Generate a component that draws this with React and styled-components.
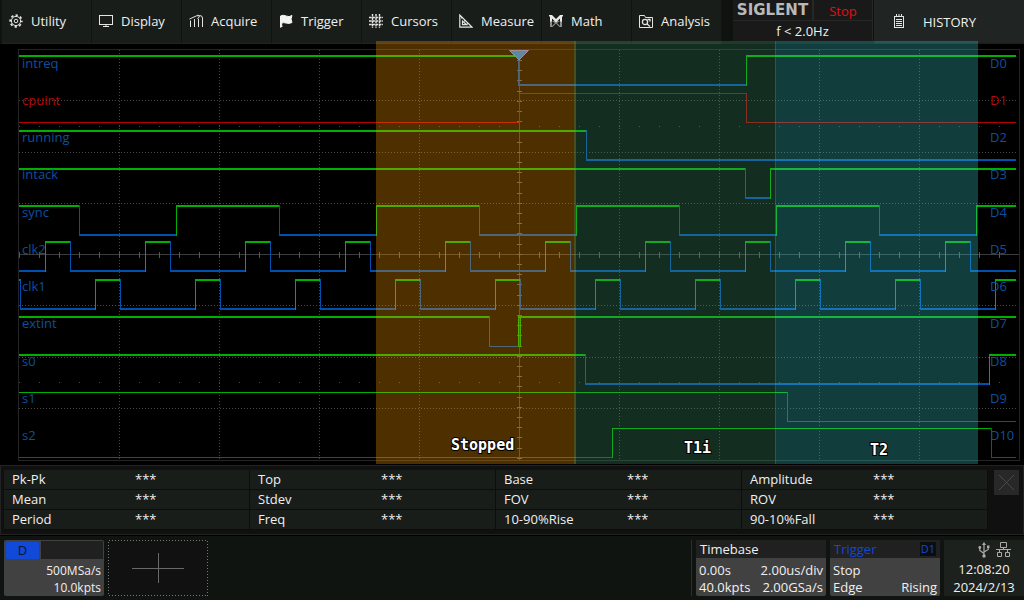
import React from "react";
import styled, { createGlobalStyle } from "styled-components";

const Global = createGlobalStyle`
  * { box-sizing: border-box; }
  body { margin: 0; background: #000; }
  button { font: inherit; color: inherit; border: 0; padding: 0; background: none; text-align: left; cursor: pointer; }
`;

const Screen = styled.main`
  display: flex;
  flex-direction: column;
  background: #000;
  color: #f0f0f0;
  font-family: "Open Sans", "Noto Sans", sans-serif;
  font-size: 13px;
  line-height: 18px;
`;

/* ---------- top bar ---------- */

const TopBar = styled.header`
  display: grid;
  grid-template-columns: minmax(0, 1fr) 140px 150px;
  column-gap: 1px;
  height: 44px;
  background: #0f1310;
`;

const Menu = styled.nav`
  display: flex;
  padding-left: 2px;
`;

const MenuButton = styled.button`
  flex: 0 1 90px;
  min-width: 0;
  display: flex;
  align-items: center;
  gap: 8px;
  padding: 0 0 2px 7px;
  background: #191d1a;
  border-right: 1px solid #101310;
  border-bottom: 1px solid #212422;
  white-space: nowrap;
`;

const Icon = styled.svg`
  flex: none;
  display: block;
  fill: none;
  stroke: #e2e5e3;
  stroke-width: 1;
`;

const Status = styled.section`
  display: grid;
  grid-template-columns: 79px 1fr;
  grid-template-rows: 20px 20px;
  gap: 1px 2px;
  background: #262826;
  height: 41px;
  padding-right: 1px;
`;

const StatusCell = styled.div`
  background: #191919;
  text-align: center;
  line-height: ${(p) => (p.$wide ? 20 : 22)}px;
  overflow: hidden;
  color: ${(p) => p.$color || "#f0f0f0"};
  grid-column: ${(p) => (p.$wide ? "1 / -1" : "auto")};
`;

const Brand = styled(StatusCell)`
  font: bold 15px/20px "DejaVu Sans", sans-serif;
  color: #b9b9b9;
`;

const HistoryButton = styled.button`
  display: flex;
  align-items: center;
  gap: 18px;
  padding: 0 0 0 19px;
  background: #202422;
  border-bottom: 1px solid #191d1a;
`;

/* ---------- waveform area ---------- */

const Plot = styled.svg`
  display: block;
  width: 100%;
  height: auto;
  overflow: visible;
  position: relative;
`;

const ChannelLabel = styled.text`
  font: 400 13px "Open Sans", sans-serif;
  fill: ${(p) => p.$color};
`;

const BandLabel = styled.text`
  font: bold 15px "DejaVu Sans Mono", monospace;
  fill: #fff;
  stroke: #000;
  stroke-width: 2;
  paint-order: stroke;
`;

/* ---------- measurements ---------- */

const Measurements = styled.section`
  display: flex;
  gap: 6px;
  margin: 1px 0;
  padding: 4px 4px 4px 3px;
  background: #101010;
  border: 1px solid #222;
`;

const MeasureTable = styled.table`
  flex: 1;
  width: 100%;
  table-layout: fixed;
  border-spacing: 0;
  background: #191d1a;
  line-height: 19px;
`;

const Name = styled.th`
  height: 20px;
  padding: 0 0 0 8px;
  text-align: left;
  font-weight: 400;
  border-bottom: 1px solid #0c0e0d;
  white-space: nowrap;
`;

const Value = styled.td`
  padding: 0 0 0 8px;
  border-bottom: 1px solid #0c0e0d;
  border-right: 1px solid #0c0e0d;
`;

const CloseButton = styled.button`
  flex: none;
  width: 25px;
  height: 25px;
  background: #282828;
`;

/* ---------- bottom bar ---------- */

const Footer = styled.footer`
  display: flex;
  gap: 4px;
  padding: 4px 0 4px 4px;
  background: #101410;
`;

const Card = styled.button`
  flex: none;
  width: ${(p) => p.$width}px;
  display: flex;
  flex-direction: column;
  background: #414141;
  border-radius: 2px;
  overflow: hidden;
`;

const CardHead = styled.span`
  align-self: stretch;
  display: flex;
  justify-content: space-between;
  align-items: center;
  height: 18px;
  padding: 0 4px;
  background: #202020;
  color: ${(p) => p.$color || "#f0f0f0"};
`;

const CardBody = styled.span`
  align-self: stretch;
  display: flex;
  flex-direction: column;
  padding: 4px 3px 0;
`;

const CardRow = styled.span`
  display: flex;
  justify-content: ${(p) => (p.$end ? "flex-end" : "space-between")};
  font-size: ${(p) => (p.$end ? 12 : 13)}px;
  line-height: 17px;
`;

const Chip = styled.span`
  padding: 0 1px;
  font-size: 11px;
  line-height: 14px;
  background: #0c0d10;
`;

const DigitalHead = styled.span`
  align-self: stretch;
  display: grid;
  grid-template-columns: 33px 1fr;
  gap: 2px;
  height: 18px;
  padding: 0 1px 0 2px;
`;

const DigitalTag = styled.span`
  margin-top: 2px;
  background: #1149d8;
  color: #0a1330;
  border-radius: 1px;
  text-align: center;
  line-height: 17px;
`;

const DigitalBlank = styled.span`
  margin-top: 1px;
  background: #202020;
`;

const AddButton = styled.button`
  flex: none;
  width: 100px;
  height: 56px;
  background: #111;
`;

const Spacer = styled.div`
  flex: 1;
  border-right: 1px solid #2c2f2d;
`;

const Clock = styled.section`
  flex: none;
  width: 80px;
  background: #1d211e;
  text-align: center;
  line-height: 18px;
`;

const ClockIcons = styled.div`
  display: flex;
  justify-content: flex-end;
  gap: 6px;
  height: 20px;
  padding: 2px 13px 0 0;
`;

/* ---------- icons ---------- */

const menu = [
  ["Utility", (
    <>
      <circle cx="7" cy="7" r="4.6" />
      <circle cx="7" cy="7" r="1.8" />
      <circle cx="7" cy="7" r="5.8" strokeWidth="1.8" strokeDasharray="2.3 2.25" strokeDashoffset="1.1" />
    </>
  )],
  ["Display", (
    <>
      <rect x="0.5" y="1.5" width="13" height="9" />
      <path d="M7 10.5V12M4 12.5h6" />
    </>
  )],
  ["Acquire", (
    <path d="M1.5 13V6.5M5.5 13V5M9.5 13V5M13.5 13V4Q13.5 1.5 10.5 1.5Q7 1.5 5 3L0.5 5M8.5 1l2 1.5-2 2.5" />
  )],
  ["Trigger", (
    <path fill="#f2f4f3" stroke="#f2f4f3" d="M1.5 13.5V2Q4 .5 7 2T13 1.5L12 5l1 3.5Q10 10 7 9T2.5 9.5L3 13" />
  )],
  ["Cursors", (
    <path strokeWidth="1.4" d="M3.5 0v14M7 0v14M10.5 0v14M0 3.5h14M0 7h14M0 10.5h14" strokeDasharray="2.6 .7" />
  )],
  ["Measure", (
    <path strokeWidth="1.2" d="M0.8 1v12.2H13.2ZM3.5 7v3.7h4.2ZM2 4h1.3M5 7h1.5M8 10l1-1" />
  )],
  ["Math", (
    <>
      <path stroke="none" fill="#8b8f8d" d="M1 7h12v6h-2.5L7 9.5 3.5 13H1z" />
      <path stroke="none" fill="#e8eae9" d="M0 1h3l4 4 4-4h3v1l-1 1v5l-2-1V4.500L7 8.500 3 4.500V7L1 8V3L0 2z" />
      <path stroke="none" fill="#191d1a" d="M3 7l3 2-3 3z" />
      <path stroke="none" fill="#191d1a" d="M11 7L8 9l3 3z" />
    </>
  )],
  ["Analysis", (
    <>
      <path d="M0.5 13.5v-12h5l1 2h7v10z" />
      <circle cx="6" cy="8" r="2.6" strokeWidth="1.3" />
      <path strokeWidth="1.3" d="M8 10l3 2.5M8.5 5.5h2.5v2" />
    </>
  )],
];

/* ---------- waveform data ---------- */

const GREEN = "#00b000";
const BLUE = "#0050b0";
const RED = "#b00000";
const LABEL_BLUE = "#0c4f9f";
const LABEL_RED = "#b80808";
const START = 19;
const END = 1016;

const pulses = (first, width) =>
  Array.from({ length: 10 }, (_, i) => [first + i * 100, first + i * 100 + width]).flat();

const channels = [
  { name: "intreq", base: 68, high: 55, low: 84, hw: 2, lw: 2, up: true, edges: [518, 746] },
  { name: "cpuint", base: 105, high: 93, low: 122, hw: 1, lw: 1, up: false, edges: [519, 746], red: true },
  { name: "running", base: 142, high: 130, low: 159, hw: 2, lw: 2, up: true, edges: [586] },
  { name: "intack", base: 179, high: 168, low: 197, hw: 2, lw: 2, up: true, edges: [745, 770] },
  { name: "sync", base: 217, high: 205, low: 234, hw: 2, lw: 2, up: true, edges: [79, 176, 279, 376, 479, 576, 679, 776, 879, 976] },
  { name: "clk2", base: 254, high: 241, low: 270, hw: 2, lw: 2, up: false, edges: pulses(45, 25) },
  { name: "clk1", base: 291, high: 279, low: 308, hw: 2, lw: 2, up: true, edges: [20, ...pulses(95, 25).slice(0, 19)] },
  { name: "extint", base: 328, high: 316, low: 346, hw: 2, lw: 1, up: true, edges: [489, 518] },
  { name: "s0", base: 366, high: 354, low: 383, hw: 2, lw: 2, up: true, edges: [585, 989] },
  { name: "s1", base: 403, high: 392, low: 421, hw: 1, lw: 1, up: true, edges: [787] },
  { name: "s2", base: 440, high: 428, low: 457, hw: 1, lw: 1, up: false, edges: [612, 991] },
];

function Wave({ ch }) {
  const stops = [START, ...ch.edges, END];
  const parts = [];
  let up = ch.up;
  for (let i = 0; i < stops.length - 1; i++) {
    const from = stops[i];
    const last = i === stops.length - 2;
    const to = last ? END : stops[i + 1] + 1;
    const color = ch.red ? RED : up ? GREEN : BLUE;
    if (i > 0) {
      parts.push(<rect key={"v" + i} x={from} y={ch.high} width="1" height={ch.low - ch.high + ch.lw} fill={color} />);
    }
    parts.push(
      <rect key={"h" + i} x={from} y={up ? ch.high : ch.low} width={to - from} height={up ? ch.hw : ch.lw} fill={color} />
    );
    up = !up;
  }
  return <g shapeRendering="crispEdges">{parts}</g>;
}

const range = (n) => Array.from({ length: n }, (_, i) => i);

function Grid() {
  return (
    <g stroke="#484848" strokeWidth="1" fill="none" shapeRendering="crispEdges">
      <rect x="18.5" y="49.5" width="1001" height="411" stroke="#242424" />
      {range(9).filter((i) => i !== 4).map((i) => (
        <path key={i} d={`M${119.5 + i * 100} 50V460`} strokeDasharray="1 2" />
      ))}
      {[100, 152, 203, 305, 357, 408].map((y) => (
        <path key={y} d={`M19 ${y}.5H1016`} strokeDasharray="1 2" />
      ))}
      <path d="M19 126.5H1016M19 382.5H1016" strokeDasharray="1 19" />
      <path d="M19 254.5H1019M519.5 50V460" stroke="#3c3c3c" />
      <path d="M19 255H1000" stroke="#585858" strokeWidth="6" strokeDasharray="1 19" />
      {range(40).map((i) => (
        <path key={i} d={`M517 ${Math.round(60 + i * 10.2)}.5h5`} stroke="#585858" />
      ))}
    </g>
  );
}

function Waveforms() {
  return (
    <Plot viewBox="0 44 1024 420" role="img" aria-label="Digital channel waveforms">
      <Grid />
      {channels.map((ch, i) => (
        <g key={ch.name}>
          <Wave ch={ch} />
          <ChannelLabel x="22" y={ch.base} $color={ch.red ? LABEL_RED : LABEL_BLUE}>{ch.name}</ChannelLabel>
          <ChannelLabel x="990" y={ch.base} $color={ch.red ? LABEL_RED : LABEL_BLUE}>{"D" + i}</ChannelLabel>
        </g>
      ))}
      <rect x="520" y="316" width="1" height="31" fill={GREEN} />
      <rect x="376" y="41" width="200" height="423" fill="#ff9900" fillOpacity="0.305" />
      <rect x="574" y="41" width="202" height="423" fill="#40996a" fillOpacity="0.3" />
      <rect x="775" y="41" width="203" height="423" fill="#39cacb" fillOpacity="0.3" />
      <path d="M509.5 50.5h19l-9.5 9.5z" fill="#5a8ba3" stroke="#a08a9c" />
      <BandLabel x="451" y="450">Stopped</BandLabel>
      <BandLabel x="684" y="453">T1i</BandLabel>
      <BandLabel x="870" y="455">T2</BandLabel>
    </Plot>
  );
}

const rows = [
  ["Pk-Pk", "Top", "Base", "Amplitude"],
  ["Mean", "Stdev", "FOV", "ROV"],
  ["Period", "Freq", "10-90%Rise", "90-10%Fall"],
];

export default function App() {
  return (
    <Screen>
      <Global />
      <TopBar>
        <Menu>
          {menu.map(([label, art]) => (
            <MenuButton key={label}>
              <Icon width="14" height="14" viewBox="0 0 14 14" aria-hidden="true">{art}</Icon>
              {label}
            </MenuButton>
          ))}
        </Menu>
        <Status>
          <Brand>SIGLENT</Brand>
          <StatusCell $color="#e01010">Stop</StatusCell>
          <StatusCell $wide>f &lt; 2.0Hz</StatusCell>
        </Status>
        <HistoryButton>
          <Icon width="12" height="15" viewBox="0 0 12 15" aria-hidden="true">
            <rect x="1.5" y="2.5" width="9" height="11" />
            <path d="M3.5 0v3M6 0v3M8.5 0v3M3 5.500h6M3 7.500h6M3 9.500h6M3 11.500h6" />
          </Icon>
          HISTORY
        </HistoryButton>
      </TopBar>

      <Waveforms />

      <Measurements>
        <MeasureTable>
          <tbody>
            {rows.map((row) => (
              <tr key={row[0]}>
                {row.map((name) => (
                  <React.Fragment key={name}>
                    <Name scope="row">{name}</Name>
                    <Value>***</Value>
                  </React.Fragment>
                ))}
              </tr>
            ))}
          </tbody>
        </MeasureTable>
        <CloseButton aria-label="Close measurements">
          <Icon width="25" height="25" viewBox="0 0 25 25" aria-hidden="true">
            <path stroke="#4a4a4a" d="M5 5l15 15M20 5L5 20" />
          </Icon>
        </CloseButton>
      </Measurements>

      <Footer>
        <Card $width={100}>
          <DigitalHead>
            <DigitalTag>D</DigitalTag>
            <DigitalBlank />
          </DigitalHead>
          <CardBody>
            <CardRow $end>500MSa/s</CardRow>
            <CardRow $end>10.0kpts</CardRow>
          </CardBody>
        </Card>
        <AddButton aria-label="Add channel">
          <Icon width="100" height="56" viewBox="0 0 100 56" aria-hidden="true">
            <rect x="0.5" y="0.5" width="99" height="55" stroke="#787878" strokeDasharray="1 2" shapeRendering="crispEdges" />
            <path stroke="#686868" d="M24 28.5h52M50.5 13v30" />
          </Icon>
        </AddButton>
        <Spacer />
        <Card $width={130}>
          <CardHead>Timebase</CardHead>
          <CardBody>
            <CardRow><span>0.00s</span><span>2.00us/div</span></CardRow>
            <CardRow><span>40.0kpts</span><span>2.00GSa/s</span></CardRow>
          </CardBody>
        </Card>
        <Card $width={110}>
          <CardHead $color="#1149d8">Trigger<Chip>D1</Chip></CardHead>
          <CardBody>
            <CardRow>Stop</CardRow>
            <CardRow><span>Edge</span><span>Rising</span></CardRow>
          </CardBody>
        </Card>
        <Clock>
          <ClockIcons>
            <Icon width="12" height="16" viewBox="0 0 12 16" aria-hidden="true">
              <path stroke="#a9aca9" strokeWidth="1.2" d="M6 2v12M1.8 6v2.5L6 11.5M10.2 5v2.5L6 10" />
              <path stroke="none" fill="#a9aca9" d="M6 0l2 3H4zM9 3.5h2.5V6H9z" />
              <circle cx="1.8" cy="5.5" r="1.4" fill="#a9aca9" stroke="none" />
              <circle cx="6" cy="14" r="1.7" fill="#a9aca9" stroke="none" />
            </Icon>
            <Icon width="15" height="16" viewBox="0 0 15 16" aria-hidden="true">
              <path stroke="#a9aca9" d="M4.5 0.5h6v5h-6zM1.5 10.5h4v4h-4zM9.5 10.5h4v4h-4zM7.5 5.5v2M0 7.5h15M3.5 7.5v3M11.5 7.5v3" />
            </Icon>
          </ClockIcons>
          <div>12:08:20</div>
          <div>2024/2/13</div>
        </Clock>
      </Footer>
    </Screen>
  );
}
